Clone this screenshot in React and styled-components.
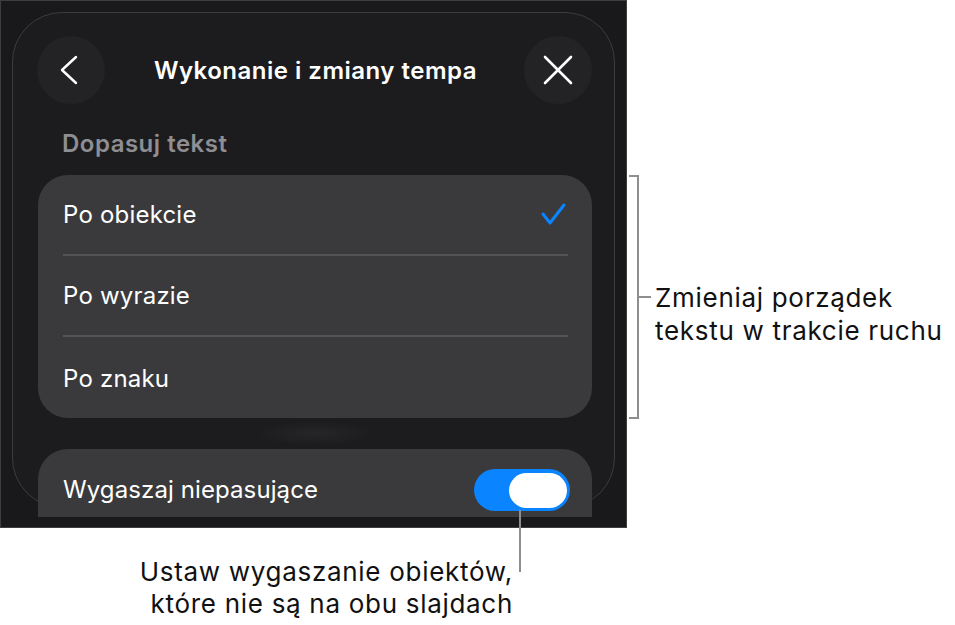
import React from 'react'
import styled, { createGlobalStyle } from 'styled-components'

const Global = createGlobalStyle`
  body {
    margin: 0;
    background: #ffffff;
    font-family: Inter, "Noto Sans", sans-serif;
  }
`

const Page = styled.div`
  width: 955px;
  height: 625px;
  display: flex;
  flex-direction: column;
  overflow: hidden;
`

const TopRow = styled.div`
  display: flex;
  align-items: flex-start;
`

const Screen = styled.div`
  width: 627px;
  height: 528px;
  box-sizing: border-box;
  border: 1px solid #3e3e40;
  background: #19191b;
  padding: 11px 0 0 11px;
  overflow: hidden;
  flex-shrink: 0;
`

const Sheet = styled.div`
  width: 603px;
  height: 496px;
  box-sizing: border-box;
  border: 1.5px solid #3c3c3f;
  border-radius: 50px;
  background: #1c1c1e;
  display: flex;
  flex-direction: column;
  padding: 23px 22px 0 24px;

  & > * {
    flex-shrink: 0;
  }
`

const Header = styled.div`
  display: flex;
  align-items: center;
  justify-content: space-between;
  height: 68px;
`

const RoundButton = styled.div`
  width: 68px;
  height: 68px;
  border-radius: 50%;
  background: #232325;
  display: flex;
  align-items: center;
  justify-content: center;
`

const Title = styled.h1`
  margin: 0 0 0 2px;
  color: #ffffff;
  font-size: 24px;
  font-weight: 600;
  letter-spacing: 0.5px;
`

const SectionLabel = styled.div`
  margin: 25px 0 0 25px;
  color: #8e8e93;
  font-size: 24px;
  font-weight: 600;
  letter-spacing: 0.5px;
  line-height: 30px;
`

const Card = styled.div`
  margin: 16px 0 0 1px;
  width: 554px;
  background: #3a3a3c;
  border-radius: 30px;
  overflow: hidden;
`

const Row = styled.div`
  height: 81px;
  box-sizing: border-box;
  margin: 0 24px 0 25px;
  display: flex;
  align-items: center;
  justify-content: space-between;
  border-bottom: ${p => (p.last ? 'none' : '2px solid #545458')};
  padding-top: ${p => (p.last ? '2px' : '0')};
`

const RowLabel = styled.span`
  color: #ffffff;
  font-size: 24px;
  font-weight: 400;
  letter-spacing: 0.2px;
`

const Gap = styled.div`
  height: 31px;
  background: radial-gradient(ellipse 60px 12px at 50% 50%, #262628 0%, rgba(28, 28, 30, 0) 100%);
  margin: 0 0 0 1px;
  width: 554px;
`

const ToggleCard = styled.div`
  width: 554px;
  height: 68px;
  margin-left: 1px;
  box-sizing: border-box;
  background: #3a3a3c;
  border-radius: 30px 30px 0 0;
  display: flex;
  align-items: flex-start;
  justify-content: space-between;
  padding: 20px 22px 0 25px;
`

const ToggleLabel = styled.span`
  color: #ffffff;
  font-size: 24px;
  line-height: 42px;
  letter-spacing: 0.1px;
`

const Switch = styled.div`
  width: 96px;
  height: 42px;
  box-sizing: border-box;
  border-radius: 21px;
  background: ${p => (p.on ? '#0a84ff' : '#5a5a5e')};
  display: flex;
  align-items: center;
  justify-content: ${p => (p.on ? 'flex-end' : 'flex-start')};
  padding: 0 3px;
`

const Knob = styled.div`
  width: 58px;
  height: 35px;
  border-radius: 18px;
  background: #ffffff;
`

const SideNote = styled.div`
  margin: 175px 0 0 2px;
  height: 244px;
  display: flex;
  align-items: center;
`

const Bracket = styled.div`
  width: 10px;
  height: 100%;
  box-sizing: border-box;
  border: 2px solid #8e8e8e;
  border-left: none;
`

const Tick = styled.div`
  width: 12px;
  height: 2px;
  background: #8e8e8e;
`

const NoteText = styled.div`
  margin: 33px 0 0 4px;
  color: #111111;
  font-size: 26px;
  letter-spacing: 0.7px;
  line-height: 33px;
  white-space: nowrap;
`

const BottomNote = styled.div`
  width: 521px;
  display: flex;
  justify-content: flex-end;
  align-items: flex-start;
`

const Leader = styled.div`
  position: relative;
  width: 2px;
  margin-left: 6px;
  align-self: stretch;

  &::before {
    content: '';
    position: absolute;
    left: 0;
    top: -18px;
    width: 2px;
    height: 62px;
    background: #8e8e8e;
  }
`

const BottomText = styled(NoteText)`
  margin: 28px 0 0 0;
  line-height: 32px;
  text-align: right;
`

const Chevron = () => (
  <svg width="68" height="68" viewBox="0 0 68 68">
    <path d="M39 21 L25 34 L39 47" fill="none" stroke="#ffffff" strokeWidth="2.4" strokeLinecap="round" strokeLinejoin="round" />
  </svg>
)

const Cross = () => (
  <svg width="68" height="68" viewBox="0 0 68 68">
    <path d="M21 21 L47 47 M47 21 L21 47" fill="none" stroke="#ffffff" strokeWidth="2.6" strokeLinecap="round" />
  </svg>
)

const Check = () => (
  <svg width="28" height="26" viewBox="0 0 28 26">
    <path d="M3 12 L10 21 L24 3" fill="none" stroke="#0a84ff" strokeWidth="3" strokeLinecap="round" strokeLinejoin="round" />
  </svg>
)

const options = [
  { label: 'Po obiekcie', selected: true },
  { label: 'Po wyrazie' },
  { label: 'Po znaku' },
]

export default function App() {
  return (
    <Page>
      <Global />
      <TopRow>
        <Screen>
          <Sheet>
            <Header>
              <RoundButton><Chevron /></RoundButton>
              <Title>Wykonanie i zmiany tempa</Title>
              <RoundButton><Cross /></RoundButton>
            </Header>
            <SectionLabel>Dopasuj tekst</SectionLabel>
            <Card>
              {options.map((o, i) => (
                <Row key={o.label} last={i === options.length - 1}>
                  <RowLabel>{o.label}</RowLabel>
                  {o.selected && <Check />}
                </Row>
              ))}
            </Card>
            <Gap />
            <ToggleCard>
              <ToggleLabel>Wygaszaj niepasujące</ToggleLabel>
              <Switch on>
                <Knob />
              </Switch>
            </ToggleCard>
          </Sheet>
        </Screen>
        <SideNote>
          <Bracket />
          <Tick />
          <NoteText>
            Zmieniaj porządek
            <br />
            tekstu w trakcie ruchu
          </NoteText>
        </SideNote>
      </TopRow>
      <BottomNote>
        <BottomText>
          Ustaw wygaszanie obiektów,
          <br />
          które nie są na obu slajdach
        </BottomText>
        <Leader />
      </BottomNote>
    </Page>
  )
}
